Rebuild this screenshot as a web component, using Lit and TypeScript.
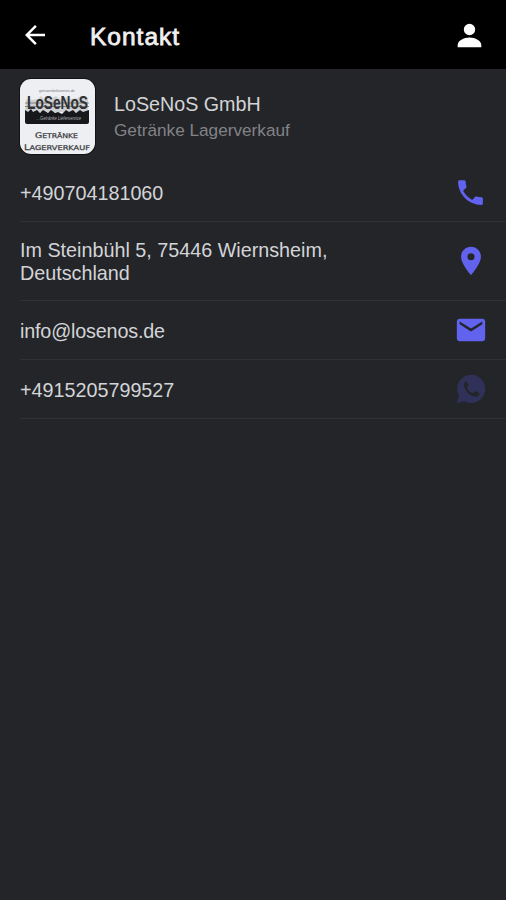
import { LitElement, html, css, svg } from "lit";
import { customElement, property } from "lit/decorators.js";

const icons = {
  back: svg`<path d="M20 11H7.83l5.59-5.59L12 4l-8 8 8 8 1.41-1.41L7.83 13H20v-2z"/>`,
  person: svg`<path d="M12 11.8a3.9 3.9 0 1 0 0-7.8 3.9 3.9 0 0 0 0 7.8zM12 13.3c-4 0-8.1 2.2-8.1 5.2V20h16.2v-1.5c0-3-4.1-5.2-8.1-5.2z"/>`,
  phone: svg`<path d="M6.62 10.79c1.44 2.83 3.76 5.14 6.59 6.59l2.2-2.2c.27-.27.67-.36 1.02-.24 1.12.37 2.33.57 3.57.57.55 0 1 .45 1 1V20c0 .55-.45 1-1 1-9.39 0-17-7.61-17-17 0-.55.45-1 1-1h3.5c.55 0 1 .45 1 1 0 1.25.2 2.45.57 3.57.11.35.03.74-.25 1.02l-2.2 2.2z"/>`,
  place: svg`<path d="M12 2C8.13 2 5 5.13 5 9c0 5.25 7 13 7 13s7-7.75 7-13c0-3.87-3.13-7-7-7zm0 9.5a2.5 2.5 0 0 1 0-5 2.5 2.5 0 0 1 0 5z"/>`,
  mail: svg`<path d="M20 4H4c-1.1 0-1.99.9-1.99 2L2 18c0 1.1.9 2 2 2h16c1.1 0 2-.9 2-2V6c0-1.1-.9-2-2-2zm0 4l-8 5-8-5V6l8 5 8-5v2z"/>`,
  whatsapp: svg`<path fill-rule="evenodd" d="M12.1 2a9.9 9.9 0 1 1-4.7 18.6L2 22l1.5-5.2A9.9 9.9 0 0 1 12.1 2zM8.5 6.7c-.5 0-1.5.8-1.5 2.3 0 4.2 4.7 8.5 8.6 8.5 1.4 0 2.4-1.1 2.4-2.3 0-.3-.2-.5-.5-.6l-2.3-1.1c-.3-.1-.5 0-.7.2l-.9 1.1c-.2.2-.4.2-.7.1-1.7-.8-2.9-2-3.7-3.5-.1-.2 0-.4.1-.6l.8-.9c.1-.2.2-.4.1-.6L9.2 7.1c-.1-.3-.3-.4-.7-.4z"/>`,
};

type IconName = keyof typeof icons;

@customElement("app-icon")
export class AppIcon extends LitElement {
  @property() name: IconName = "back";

  static styles = css`
    :host { display: block; flex: none; }
    svg { display: block; width: 100%; height: 100%; fill: currentColor; }
  `;

  render() {
    return html`<svg viewBox="0 0 24 24" aria-hidden="true">${icons[this.name]}</svg>`;
  }
}

@customElement("company-logo")
export class CompanyLogo extends LitElement {
  static styles = css`
    :host { display: block; flex: none; width: 75px; height: 75px; border-radius: 11px; overflow: hidden; background: #eeeff2; box-shadow: 0 0 0 1px #111214; }
    svg { display: block; }
    .tiny { font: 4px "Liberation Sans", sans-serif; fill: #77787c; }
    .name { font: bold 13.5px "Liberation Sans", sans-serif; fill: #303134; }
    .strip { font: italic 4.5px "Liberation Sans", sans-serif; fill: #b2b3b6; }
    .caps { font: 6.5px "DejaVu Sans", sans-serif; fill: #3c3d42; stroke: #3c3d42; stroke-width: 0.25px; }
    .initial { font-size: 7.8px; }
  `;

  render() {
    return html`<svg width="75" height="75" viewBox="0 0 75 75">
      <text class="tiny" x="19" y="13" textLength="36" lengthAdjust="spacingAndGlyphs">getraenkelosenos.de</text>
      <path fill="#a9aaad" d="M6 21l3-3 2 3 7-1 3-3 3 3 8-1 4-2 4 3 8-2 3 2 7-1 3-2 4 3 3-2v15H5z" opacity=".45"/>
      <text class="name" transform="translate(7 30) scale(1 1.4)" textLength="61" lengthAdjust="spacingAndGlyphs">LoSeNoS</text>
      <path stroke="#3b3c3f" stroke-width="1" d="M5 24h64M5 27.5h64" opacity=".55"/>
      <path fill="#17181b" d="M5 31l3 2 3-3 2 3 4-2 3 3 3-3 5 3 3-3 4 3 3-1 4 2 4-4 3 2 4-2 3 3 4-3 3 2 6-2v12q0 2-2 2H7q-2 0-2-2z"/>
      <text class="strip" x="16" y="41" textLength="45" lengthAdjust="spacingAndGlyphs">…Getränke Lieferservice</text>
      <text class="caps" x="15" y="59" textLength="43" lengthAdjust="spacingAndGlyphs"><tspan class="initial">G</tspan>ETRÄNKE</text>
      <text class="caps" x="4" y="71" textLength="66" lengthAdjust="spacingAndGlyphs"><tspan class="initial">L</tspan>AGERVERKAUF</text>
    </svg>`;
  }
}

const contacts: { text: string; icon: IconName; kind?: string }[] = [
  { text: "+490704181060", icon: "phone", kind: "phone" },
  { text: "Im Steinbühl 5, 75446 Wiernsheim, Deutschland", icon: "place" },
  { text: "info@losenos.de", icon: "mail", kind: "mail" },
  { text: "+4915205799527", icon: "whatsapp", kind: "muted" },
];

@customElement("app-root")
export class AppRoot extends LitElement {
  static styles = css`
    :host {
      display: flex; flex-direction: column; box-sizing: border-box; height: 100vh;
      background: #242529; color: #d3d4d7;
      font-family: "Liberation Sans", Arial, sans-serif;
    }
    .bar { display: flex; align-items: center; flex: none; height: 69px; box-sizing: border-box; padding: 1px 19px 0 20px; background: #000; color: #fff; }
    .back { width: 30px; height: 30px; }
    .title { flex: 1; margin: 3px 0 0 40px; font-size: 24.5px; font-weight: 400; line-height: 30px; letter-spacing: 1px; color: #f0f0f0; -webkit-text-stroke: 0.8px #f0f0f0; }
    .user { width: 35px; height: 35px; }
    .company { display: flex; align-items: center; flex: none; gap: 19px; height: 95px; box-sizing: border-box; padding: 0 20px; }
    .name { font-size: 19.7px; line-height: 26px; }
    .kind { font-size: 17.2px; line-height: 26px; color: #828387; }
    .list { margin: 0; padding: 0 0 0 20px; list-style: none; }
    .row { display: flex; align-items: center; justify-content: space-between; box-sizing: border-box; min-height: 59px; padding: 17px 18px 15px 0; border-bottom: 1px solid #303135; }
    .row:first-child { min-height: 58px; padding-top: 16px; }
    .text { width: 340px; font-size: 19.75px; line-height: 23px; }
    .text.mail { letter-spacing: -0.17px; }
    .icon { width: 34px; height: 34px; margin: -8px 0 -6px; color: #6163ef; }
    .icon.phone { width: 33px; height: 33px; margin: -8px 1px -6px 0; }
    .icon.muted { color: #303158; }
  `;

  render() {
    return html`
      <header class="bar">
        <app-icon class="back" name="back"></app-icon>
        <h1 class="title">Kontakt</h1>
        <app-icon class="user" name="person"></app-icon>
      </header>
      <section class="company">
        <company-logo></company-logo>
        <div>
          <div class="name">LoSeNoS GmbH</div>
          <div class="kind">Getränke Lagerverkauf</div>
        </div>
      </section>
      <ul class="list">
        ${contacts.map(
          (c) => html`<li class="row">
            <span class="text ${c.kind ?? ""}">${c.text}</span>
            <app-icon class="icon ${c.kind ?? ""}" name=${c.icon}></app-icon>
          </li>`,
        )}
      </ul>
    `;
  }
}
